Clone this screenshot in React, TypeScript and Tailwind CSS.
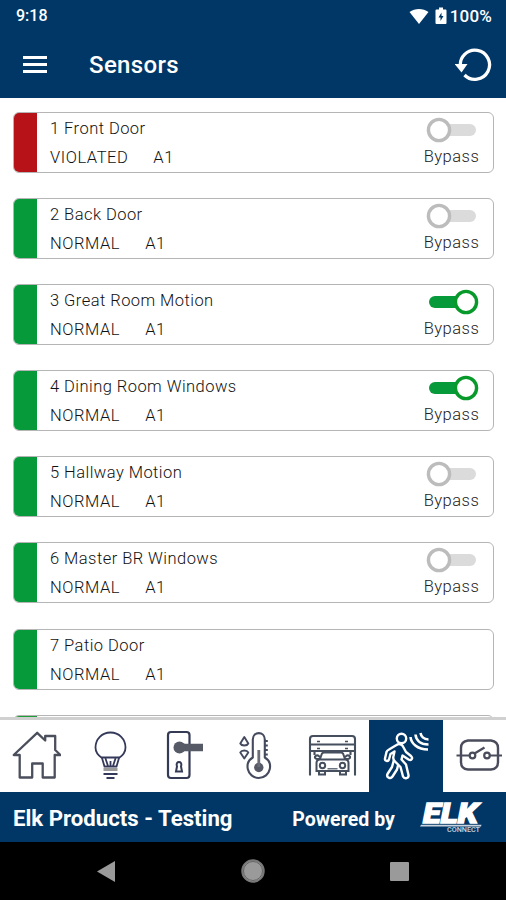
import { useState } from 'react';
import type { ReactNode } from 'react';

interface Sensor {
  id: number;
  name: string;
  status: 'NORMAL' | 'VIOLATED';
  area: string;
  bypass?: boolean;
}

const initialSensors: Sensor[] = [
  { id: 1, name: 'Front Door', status: 'VIOLATED', area: 'A1', bypass: false },
  { id: 2, name: 'Back Door', status: 'NORMAL', area: 'A1', bypass: false },
  { id: 3, name: 'Great Room Motion', status: 'NORMAL', area: 'A1', bypass: true },
  { id: 4, name: 'Dining Room Windows', status: 'NORMAL', area: 'A1', bypass: true },
  { id: 5, name: 'Hallway Motion', status: 'NORMAL', area: 'A1', bypass: false },
  { id: 6, name: 'Master BR Windows', status: 'NORMAL', area: 'A1', bypass: false },
  { id: 7, name: 'Patio Door', status: 'NORMAL', area: 'A1' },
];

const HomeIcon = () => (
  <svg viewBox="-1.2 0 50 50" className="w-[50px] h-[50px]" fill="none" stroke="#4b4f5c" strokeWidth="2.3" strokeLinejoin="round">
    <path d="M7.5 47V25H1.5L25 2.8L33 10.5V6H43V20L48.3 25H42.5V47.5H30.5V33.5H20V47.5H7.5Z" />
  </svg>
);

const BulbIcon = () => (
  <svg viewBox="0 0 50 50" className="w-[50px] h-[50px]" fill="none" stroke="#34395a" strokeWidth="1.8">
    <path d="M17 28C12.5 25 10.500 21 10.500 17.500C10.500 9 17 2.500 25.500 2.500S40.500 9 40.500 17.500C40.500 21 38.500 25 34 28L31.500 36.500H19.500Z" />
    <path d="M16.500 27.500H34.500M20.500 28.500L23 36M25.500 31V36M30.500 28.500L28 36" />
    <path d="M18.500 39.500H32.500" stroke="#9a9a9a" strokeWidth="3" />
    <path d="M18.500 44H32.500M21.500 48H29.500" strokeWidth="2" />
  </svg>
);

const LockIcon = () => (
  <svg viewBox="0 0 50 50" className="w-[50px] h-[50px]" fill="none" stroke="#363b55" strokeWidth="2.2">
    <rect x="9" y="2" width="21.5" height="46" rx="3" />
    <path d="M21 17.5H44" stroke="#565a66" strokeWidth="7.5" />
    <circle cx="20.5" cy="17.5" r="6" fill="#565a66" stroke="none" />
    <path d="M18 36.500C17 33 18.500 32 20 32S23 33 22 36.500L23 41.500H17Z" strokeWidth="2" />
  </svg>
);

const ThermostatIcon = () => (
  <svg viewBox="0.7 0 50 50" className="w-[50px] h-[50px]" fill="none" stroke="#454a5f" strokeWidth="2.1">
    <path d="M20.500 27.500V9.500C20.500 1 32.500 1 32.500 9.500V27.500C37 30 38.500 34 37.500 39C36.500 44 32 48 26.500 48S16.500 44 15.500 39C14.500 34 16 30 20.500 27.500Z" />
    <circle cx="26.500" cy="37.500" r="4.700" fill="#565a66" stroke="none" />
    <path d="M26.500 20V37" stroke="#6a6d78" strokeWidth="2.800" />
    <path d="M32.500 11H35.500M32.500 15.500H35.500M32.500 20H35.500M32.500 24.500H35.500" strokeWidth="1.800" />
    <path d="M12 7L8 13.500Q9 15.500 12 15.500T16 13.500ZM12 28.500L8 22.500Q9 20.500 12 20.500T16 22.500Z" strokeWidth="1.900" strokeLinejoin="round" />
  </svg>
);

const GarageIcon = () => (
  <svg viewBox="0 0 50 50" className="w-[50px] h-[50px]" fill="none" stroke="#454f5e" strokeWidth="2">
    <path d="M3 45.500V9Q3 6 6 6H45Q48 6 48 9V45.500M3 14.500H48M3 21H48M7.500 25V21M43.500 25V21" strokeWidth="2.100" />
    <path d="M10 11.500H13M38 11.500H41M10 18.500H13M38 18.500H41" strokeWidth="1.500" />
    <path d="M13 29L15 23.500Q15.500 22.500 17 22.500H34Q35.500 22.500 36 23.500L38 29M12.500 29H10Q7.500 28.500 8 26.500Q9 25 11 25.500L13.500 27.500M38.500 29H41Q43.500 28.500 43 26.500Q42 25 40 25.500L37.500 27.500M9.500 41V33Q9.500 29.500 13 29.500H38Q41.500 29.500 41.500 33V41Z" strokeWidth="2" />
    <circle cx="15.500" cy="35.500" r="2.700" strokeWidth="2" />
    <circle cx="35.500" cy="35.500" r="2.700" strokeWidth="2" />
    <path d="M20.500 38.800H30.500" strokeWidth="1.200" />
    <path d="M12 41V44.500H18V41M33 41V44.500H39V41" strokeWidth="2" />
  </svg>
);

const MotionIcon = () => (
  <svg viewBox="0 0 50 50" className="w-[50px] h-[50px]" fill="none" stroke="#fff" strokeWidth="2.4" strokeLinejoin="round" strokeLinecap="round">
    <circle cx="21.500" cy="8.500" r="4.700" />
    <path d="M16.500 15C18.500 13.500 22 14 23 16.500L26 22L31 26C33.500 28.500 31 31 28.500 29.500L22.500 25.500L21.500 29.500L26 34.500L28.500 45C29 48.500 24.500 49.500 23 46.500L20.500 37L15 31.500C13 30 13 28 13.500 26L14.500 21.500L10.500 24L9 29.500C8 32 4.500 31 5 28.500L6.500 22C7 20.500 8 20 9 19.500Z" />
    <path d="M13.500 31.500L12 37L7.500 44C6 47.500 10.500 49.500 12.500 46.500L17 39.500L18 35.500" />
    <path d="M30.500 7C31 13 37 19.500 48 19.500M35.500 4.500C36 10 40 14.500 48.500 14.500M40.500 3C41 6 43.500 9.500 48.500 9.500" strokeWidth="2.600" strokeLinecap="butt" />
  </svg>
);

const RelayIcon = () => (
  <svg viewBox="0 0 50 50" className="w-[50px] h-[50px]" fill="none" stroke="#4a4c5c" strokeWidth="2.2">
    <path d="M14 10.5H37Q44 11.500 44 18V32Q44 39 37 39.500H14Q7 39 7 32V18Q7 11.500 14 10.500Z" strokeWidth="2.400" />
    <circle cx="18.500" cy="25.500" r="2.800" />
    <circle cx="33" cy="25.500" r="2.800" />
    <path d="M2.500 25.500H16M35.500 25.500H48M20.500 23.500L30.500 17.500" />
  </svg>
);

const tabs: { id: string; icon: ReactNode }[] = [
  { id: 'home', icon: <HomeIcon /> },
  { id: 'lights', icon: <BulbIcon /> },
  { id: 'locks', icon: <LockIcon /> },
  { id: 'thermostats', icon: <ThermostatIcon /> },
  { id: 'garage', icon: <GarageIcon /> },
  { id: 'sensors', icon: <MotionIcon /> },
  { id: 'outputs', icon: <RelayIcon /> },
];

const Toggle = ({ on }: { on: boolean }) => (
  <svg viewBox="0 0 54 26" className="w-[54px] h-[26px]">
    <rect x={on ? 4 : 16} y="7" width={on ? 32 : 35} height="12" rx="6" fill={on ? '#079a3b' : '#dbdbdb'} />
    <circle cx={on ? 41 : 14} cy="13" r="10.600" fill="#fff" stroke={on ? '#079a2b' : '#bcbcbc'} strokeWidth="3.400" />
  </svg>
);

const SensorCard = ({ sensor, onToggle }: { sensor: Sensor; onToggle: (id: number) => void }) => (
  <div className="h-[61px] shrink-0 flex overflow-hidden rounded-[6px] border border-[#b5b5b5] bg-white">
    <div className={`w-[23px] shrink-0 ${sensor.status === 'VIOLATED' ? 'bg-[#b71218]' : 'bg-[#079a3b]'}`} />
    <div className="flex-1 pl-[13px] pt-1 font-light text-[#111]">
      <p className="text-[16.5px] leading-[24px] tracking-[0.45px]">
        {sensor.id} {sensor.name}
      </p>
      <p className="mt-[5px] flex gap-[25px] text-[16.5px] leading-[24px] tracking-[0.55px]">
        <span>{sensor.status}</span>
        <span>{sensor.area}</span>
      </p>
    </div>
    {sensor.bypass !== undefined && (
      <button onClick={() => onToggle(sensor.id)} className="w-[83px] shrink-0 flex flex-col items-center pt-1">
        <Toggle on={sensor.bypass} />
        <span className="text-[16.5px] leading-[27px] font-light tracking-[0.5px] text-[#222]">Bypass</span>
      </button>
    )}
  </div>
);

const App = () => {
  const [sensors, setSensors] = useState(initialSensors);
  const [activeTab, setActiveTab] = useState('sensors');

  const handleToggle = (id: number) => {
    setSensors(prev => prev.map(s => (s.id === id ? { ...s, bypass: !s.bypass } : s)));
  };

  return (
    <div className="w-[506px] h-[900px] flex flex-col overflow-hidden bg-white font-['Roboto',sans-serif]">
      <header className="h-[98px] shrink-0 bg-[#013766] text-white">
        <div className="h-[31px] flex items-center justify-between pl-4 pr-[14px]">
          <span className="text-[16px] font-medium leading-[31px]">9:18</span>
          <div className="flex items-center pt-px">
            <svg viewBox="0 0 20 17" className="w-5 h-[17px]" fill="#fff">
              <path d="M0.5 4C6 0 14 0 19.5 4L10 16Z" />
            </svg>
            <svg viewBox="0 0 12 18" className="ml-[6px] w-3 h-[18px]">
              <path d="M4 0.500H8V2.500H10.500Q11.500 2.500 11.500 3.500V16Q11.500 17 10.500 17H1.500Q0.500 17 0.500 16V3.500Q0.500 2.500 1.500 2.500H4Z" fill="#fff" />
              <path d="M6.500 5.500L3.500 10.500H5.500V14L8.500 9H6.500Z" fill="#013766" />
            </svg>
            <span className="ml-[3px] text-[17px] leading-[20px] font-medium tracking-[0.2px]">100%</span>
          </div>
        </div>
        <div className="h-[67px] flex items-center pl-[23px] pr-[13px]">
          <svg viewBox="0 0 24 18" className="w-6 h-[18px]" stroke="#fff" strokeWidth="3">
            <path d="M0 1.500H24M0 8.500H24M0 15.500H24" />
          </svg>
          <h1 className="ml-[42px] pt-px text-[24px] font-medium tracking-[0.35px]">Sensors</h1>
          <svg viewBox="0 0 38 34" className="ml-auto w-[38px] h-[34px]" fill="none">
            <path d="M5.500 19A14.600 14.600 0 1 1 9.500 27" stroke="#fff" strokeWidth="3.300" />
            <path d="M-0.500 16H12.500L6.500 24.500Z" fill="#fff" />
          </svg>
        </div>
      </header>

      <main className="flex-1 min-h-0 overflow-hidden px-3 pt-[14px] pl-[13px] flex flex-col gap-[25.1px]">
        {sensors.map(sensor => (
          <SensorCard key={sensor.id} sensor={sensor} onToggle={handleToggle} />
        ))}
        {/* top edge of the next row in the scroll list */}
        <div className="h-[61px] shrink-0 flex overflow-hidden rounded-[6px] border border-[#b5b5b5]">
          <div className="w-[23px] bg-[#229c36]" />
        </div>
      </main>

      <nav className="h-[75px] shrink-0 flex overflow-hidden border-t-[3px] border-[#d0d0d0] bg-white">
        {tabs.map(tab => (
          <button
            key={tab.id}
            onClick={() => setActiveTab(tab.id)}
            className={`w-[73.9px] shrink-0 flex items-center justify-center pr-[2px] pb-[2px] ${activeTab === tab.id ? 'bg-[#013766]' : ''}`}
          >
            {tab.icon}
          </button>
        ))}
      </nav>

      <footer className="h-[50px] shrink-0 flex items-center bg-[#013766] pl-[13px] pr-6 text-white">
        <span className="pt-[3px] text-[22.2px] font-bold">Elk Products - Testing</span>
        <span className="ml-auto pt-[5px] text-[19.5px] font-bold tracking-[0.05px]">Powered by</span>
        <svg viewBox="0 0 62 32" className="ml-[25px] w-[62px] h-8 overflow-visible" fill="#fff">
          <text x="3" y="22" fontSize="27" fontWeight="900" fontStyle="italic" fontFamily="Roboto, sans-serif" textLength="55" lengthAdjust="spacingAndGlyphs" stroke="#fff" strokeWidth="1.3">ELK</text>
          <path d="M1 23.700H61.500L61 25.500H0Z" fill="#c9d3df" />
          <text x="27" y="31" fontSize="6.500" fontWeight="500" fontFamily="Roboto, sans-serif" fill="#c9d3df" textLength="33" lengthAdjust="spacingAndGlyphs">CONNECT</text>
        </svg>
      </footer>

      <div className="h-[58px] shrink-0 flex items-center justify-between bg-black pl-[97px] pr-[97px]">
        <svg viewBox="0 0 18 21" className="w-[18px] h-[21px]" fill="#9a9a9a">
          <path d="M0 10.500L18 0V21Z" />
        </svg>
        <svg viewBox="0 0 24 24" className="w-6 h-6">
          <circle cx="12" cy="12" r="11" fill="#9a9a9a" stroke="#777" strokeWidth="1.500" />
          <circle cx="12" cy="12" r="9.500" fill="none" stroke="#555" strokeWidth="0.800" />
        </svg>
        <div className="w-[19px] h-[19px] rounded-[1px] bg-[#9a9a9a]" />
      </div>
    </div>
  );
};

export default App;
